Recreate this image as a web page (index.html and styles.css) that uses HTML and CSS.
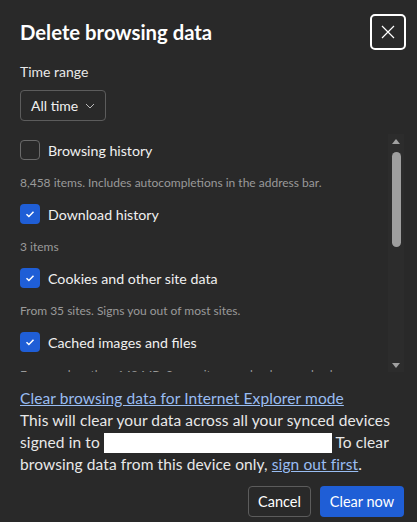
FILE: index.html
```html
<!DOCTYPE html>
<html lang="en">

<head>
    <meta charset="UTF-8">
    <meta name="viewport" content="width=device-width, initial-scale=1.0">
    <title>Delete browsing data</title>
    <link rel="stylesheet" href="styles.css">
</head>

<body>
    <div class="dialog">

        <div class="dialog-header">
            <h1 class="dialog-title">Delete browsing data</h1>
            <button type="button" class="close-btn" aria-label="Close">
                <svg width="14" height="14" viewBox="0 0 14 14">
                    <path d="M1 1 L13 13 M13 1 L1 13" stroke="#fff" stroke-width="1.2" fill="none" />
                </svg>
            </button>
        </div>

        <div class="range-label">Time range</div>
        <button type="button" class="range-select">
            All time
            <svg width="10" height="6" viewBox="0 0 10 6">
                <path d="M1 1 L5 5 L9 1" stroke="#bbb" stroke-width="1" fill="none" />
            </svg>
        </button>

        <div class="data-list">
            <div class="data-items">
                <div class="item">
                    <div class="item-row">
                        <span class="checkbox"></span>
                        <span class="item-label">Browsing history</span>
                    </div>
                    <div class="item-desc">8,458 items. Includes autocompletions in the address bar.</div>
                </div>
                <div class="item">
                    <div class="item-row">
                        <span class="checkbox checked"></span>
                        <span class="item-label">Download history</span>
                    </div>
                    <div class="item-desc">3 items</div>
                </div>
                <div class="item">
                    <div class="item-row">
                        <span class="checkbox checked"></span>
                        <span class="item-label">Cookies and other site data</span>
                    </div>
                    <div class="item-desc">From 35 sites. Signs you out of most sites.</div>
                </div>
                <div class="item">
                    <div class="item-row">
                        <span class="checkbox checked"></span>
                        <span class="item-label">Cached images and files</span>
                    </div>
                    <div class="item-desc">Frees up less than 148 MB. Some sites may load more slowly on your next visit.</div>
                </div>
            </div>

            <!-- fake scrollbar -->
            <div class="scrollbar">
                <span class="arrow up"></span>
                <span class="thumb"></span>
                <span class="arrow down"></span>
            </div>
        </div>

        <div class="dialog-footer">
            <a href="#" class="link">Clear browsing data for Internet Explorer mode</a>
            <p class="sync-note">This will clear your data across all your synced devices signed in to <span class="redacted"></span> To clear browsing data from this device only, <a href="#" class="link">sign out first</a>.</p>
        </div>

        <div class="dialog-buttons">
            <button type="button" class="btn cancel">Cancel</button>
            <button type="button" class="btn primary">Clear now</button>
        </div>
    </div>
</body>

</html>
```

FILE: styles.css
```css
html {
    box-sizing: border-box;
}

*,
*::before,
*::after {
    box-sizing: inherit;
}

body {
    margin: 0;
    background-color: #292929;
    color: #e8e8e8;
    font-family: Lato, "Noto Sans", sans-serif;
}

.dialog {
    padding: 14px 13px 0 20px;
}

.dialog-header {
    display: flex;
    justify-content: space-between;
    align-items: center;
    height: 36px;
    margin-right: -2px;
}

.dialog-title {
    margin: 0;
    font-size: 20.3px;
    font-weight: 700;
    color: #fff;
}

.close-btn {
    width: 36px;
    height: 36px;
    border: 2px solid #fff;
    border-radius: 5px;
    background-color: transparent;
    display: flex;
    align-items: center;
    justify-content: center;
    padding: 0;
}

.range-label {
    margin-top: 13px;
    font-size: 14px;
    line-height: 18px;
}

.range-select {
    margin-top: 9px;
    height: 31px;
    padding: 0 10px;
    display: flex;
    align-items: center;
    gap: 7px;
    border: 1px solid #5c5c5c;
    border-radius: 4px;
    background-color: transparent;
    color: #f0f0f0;
    font-family: inherit;
    font-size: 14px;
}

.data-list {
    display: flex;
    height: 238px;
    margin-top: 13px;
    overflow: hidden;
}

.data-items {
    flex: 1;
    padding-top: 6px;
    overflow: hidden;
}

.item {
    height: 64px;
}

.item-row {
    display: flex;
    align-items: center;
    gap: 8px;
    height: 20px;
}

.checkbox {
    width: 20px;
    height: 20px;
    border: 1px solid #6a6a6a;
    border-radius: 4px;
    flex-shrink: 0;
}

.checkbox.checked {
    border: none;
    background-color: #1f5ed6;
    background-image: url("data:image/svg+xml,%3Csvg xmlns='http://www.w3.org/2000/svg' width='20' height='20'%3E%3Cpath d='M6.5 10.2 L8.9 12.5 L13.5 7.8' stroke='white' stroke-width='1.5' fill='none'/%3E%3C/svg%3E");
}

.item-label {
    font-size: 14.2px;
    color: #f0f0f0;
}

.item-desc {
    margin-top: 15px;
    font-size: 12px;
    line-height: 16px;
    color: #9a9a9a;
    white-space: nowrap;
    overflow: hidden;
    width: 348px;
}

.scrollbar {
    width: 16px;
    margin-left: 7px;
    background-color: #2c2c2c;
    display: flex;
    flex-direction: column;
    align-items: center;
    padding: 5px 0 4px;
}

.arrow {
    width: 0;
    height: 0;
    border-left: 4px solid transparent;
    border-right: 4px solid transparent;
}

.arrow.up {
    border-bottom: 5px solid #a0a0a0;
}

.arrow.down {
    margin-top: auto;
    border-top: 5px solid #a0a0a0;
}

.thumb {
    width: 9px;
    height: 95px;
    margin-top: 8px;
    border-radius: 5px;
    background-color: #9e9e9e;
}

.dialog-footer {
    margin-top: 15px;
    font-size: 15.5px;
    line-height: 22px;
    letter-spacing: 0.1px;
    margin-right: -2px;
}

.link {
    color: #99bdf2;
    text-decoration: underline;
}

.sync-note {
    margin: 0;
    color: #e8e8e8;
}

.redacted {
    display: inline-block;
    width: 228px;
    height: 20px;
    background-color: #fff;
    vertical-align: -5px;
}

.dialog-buttons {
    display: flex;
    justify-content: flex-end;
    gap: 9px;
    margin-top: 11px;
}

.btn {
    height: 31px;
    border-radius: 4px;
    font-family: inherit;
    font-size: 14.5px;
    color: #fff;
}

.cancel {
    width: 63px;
    border: 1px solid #5c5c5c;
    background-color: transparent;
}

.primary {
    width: 84px;
    border: none;
    background-color: #1f5ed6;
}
```
